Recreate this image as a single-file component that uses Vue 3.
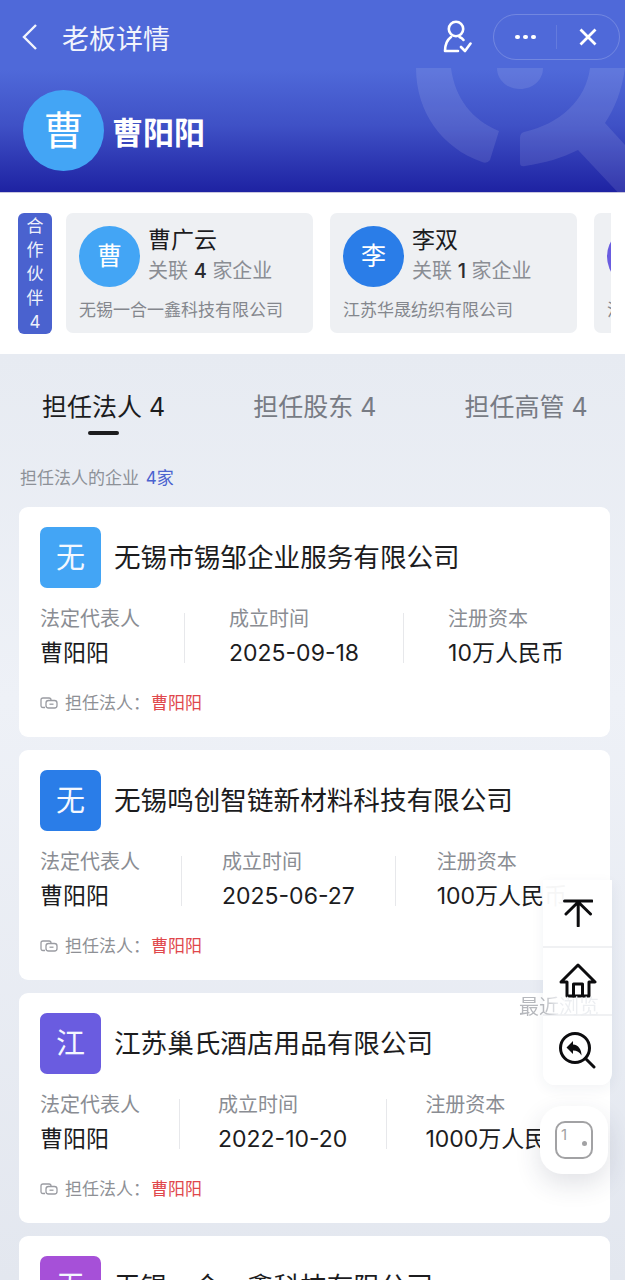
<script setup>
const partners = [
  { id: 1, initial: '曹', name: '曹广云', count: 4, company: '无锡一合一鑫科技有限公司', color: '#43a5f5' },
  { id: 2, initial: '李', name: '李双', count: 1, company: '江苏华晟纺织有限公司', color: '#2a7de8' },
  { id: 3, initial: '江', name: '江', count: 1, company: '江苏巢氏酒店用品有限公司', color: '#6a5ce0' }
]

const tabs = ['担任法人 4', '担任股东 4', '担任高管 4']

const companies = [
  { id: 1, initial: '无', name: '无锡市锡邹企业服务有限公司', date: '2025-09-18', capital: '10万人民币', color: '#43a5f5', gap: 44 },
  { id: 2, initial: '无', name: '无锡鸣创智链新材料科技有限公司', date: '2025-06-27', capital: '100万人民币', color: '#2a7de8', gap: 40.5 },
  { id: 3, initial: '江', name: '江苏巢氏酒店用品有限公司', date: '2022-10-20', capital: '1000万人民币', color: '#6a5ce0', gap: 38.5 },
  { id: 4, initial: '无', name: '无锡一合一鑫科技有限公司', date: '2024-03-12', capital: '100万人民币', color: '#a650d8', gap: 41 }
]
</script>

<template>
  <div class="page">
    <header class="hero">
      <svg class="watermark" viewBox="415 68 210 124" width="210" height="124">
        <path d="M416 68H451C455 98 472 120 499 131L490 160Q487 164 482 162C442 148 416 112 416 68Z" />
        <path d="M497 68H543C543 80 533 89 520 89C507 89 497 80 497 68Z" />
        <path d="M590 68C586 100 560 124 524 132Q520 133 520 138V163Q520 167 525 166C545 163 562 158 578 150L625 200V145L605 123C615 108 622 90 625 68Z" />
      </svg>
      <div class="nav">
        <svg class="back" viewBox="0 0 18 28" width="18" height="28">
          <path d="M15 2L3 14L15 26" />
        </svg>
        <span class="nav-title">老板详情</span>
        <svg class="user-icon" viewBox="0 0 30 34" width="30" height="34">
          <circle cx="14" cy="9" r="7.2" />
          <path d="M9 17C5 20 3 25 3 31H16" />
          <path d="M17.500 17C19 17.600 20.500 18.600 21.500 20" />
          <path d="M19 27L23 31L28.500 23.500" />
        </svg>
        <div class="capsule">
          <div class="dots"><i></i><i></i><i></i></div>
          <span class="capsule-sep"></span>
          <svg class="close" viewBox="0 0 20 20" width="20" height="20">
            <path d="M2.500 2.500L17.500 17.500M17.500 2.500L2.500 17.500" />
          </svg>
        </div>
      </div>
      <div class="boss">
        <div class="boss-avatar">曹</div>
        <span class="boss-name">曹阳阳</span>
      </div>
    </header>

    <section class="partners">
      <div class="partner-badge">
        <span>合</span><span>作</span><span>伙</span><span>伴</span><span>4</span>
      </div>
      <div class="partner-list">
        <div v-for="p in partners" :key="p.id" class="partner-card">
          <div class="partner-top">
            <div class="partner-avatar" :style="{ background: p.color }">{{ p.initial }}</div>
            <div>
              <div class="partner-name">{{ p.name }}</div>
              <div class="partner-sub">关联 <b>{{ p.count }}</b> 家企业</div>
            </div>
          </div>
          <div class="partner-company">{{ p.company }}</div>
        </div>
      </div>
    </section>

    <main class="content">
      <div class="tabs">
        <div v-for="(tab, index) in tabs" :key="tab" class="tab" :class="{ active: index === 0 }">{{ tab }}</div>
      </div>
      <div class="section-head">担任法人的企业 <em>4家</em></div>

      <div class="cards">
        <article v-for="c in companies" :key="c.id" class="card">
          <div class="card-head">
            <div class="card-icon" :style="{ background: c.color }">{{ c.initial }}</div>
            <h3>{{ c.name }}</h3>
          </div>
          <div class="facts" :style="{ gap: c.gap + 'px' }">
            <div>
              <div class="label">法定代表人</div>
              <div class="value">曹阳阳</div>
            </div>
            <span class="rule"></span>
            <div>
              <div class="label">成立时间</div>
              <div class="value">{{ c.date }}</div>
            </div>
            <span class="rule"></span>
            <div>
              <div class="label">注册资本</div>
              <div class="value">{{ c.capital }}</div>
            </div>
          </div>
          <div class="card-foot">
            <svg viewBox="0 0 18 12" width="18" height="12">
              <path d="M5 10.500H3Q1 10.500 1 8.500V3Q1 1 3 1H9Q11 1 11 3" />
              <rect x="6" y="3.500" width="11" height="7.500" rx="2.500" />
              <path d="M9.500 7.200H13.500" />
            </svg>
            <span>担任法人：</span><strong>曹阳阳</strong>
          </div>
        </article>
      </div>
    </main>

    <div class="float-panel">
      <div class="float-item">
        <svg viewBox="0 0 30 28" width="30" height="28">
          <path d="M1.500 2H29M15.200 27V3M3 15L15.200 3L27.500 15" />
        </svg>
      </div>
      <div class="float-item">
        <svg viewBox="0 0 38 36" width="38" height="36">
          <path d="M2 19L19 2L36 19H30V33H8V19Z" />
          <path d="M14.500 33V21H23.500V33" />
        </svg>
      </div>
      <div class="float-item">
        <svg viewBox="0 0 38 38" width="38" height="38">
          <circle cx="17" cy="17" r="14.500" />
          <path d="M27.500 27.500L36 36" />
          <path class="solid" d="M15 10L8.500 16.500L15 23V19.500C19 19.500 21.500 21 23.500 24.500C23.500 18.500 20.500 14 15 13.500Z" />
        </svg>
      </div>
    </div>
    <div class="recent">最近浏览</div>
    <div class="float-tabs">
      <div class="tab-count">
        <span>1</span>
        <i></i>
      </div>
    </div>
  </div>
</template>

<style>
html,
body {
  margin: 0;
  background: #e9edf4;
}
</style>

<style scoped>
.page {
  position: relative;
  width: 625px;
  height: 1280px;
  overflow: hidden;
  background: linear-gradient(180deg, #e7ebf2 354px, #eef1f7 700px, #e3e7ef 1280px);
  font-family: Inter, "Noto Sans CJK SC", "Noto Sans", sans-serif;
  color: #1c1c1e;
}

.hero {
  position: relative;
  height: 192px;
  background: linear-gradient(180deg, #4f69d9 0, #4f69d9 70px, #3f51c6 125px, #1e22a2 192px);
  color: #fff;
  border-bottom: 1px solid #c9c6de;
  box-sizing: content-box;
}

.watermark {
  position: absolute;
  right: 0;
  bottom: 0;
  fill: rgba(255, 255, 255, 0.1);
}

.nav {
  position: relative;
  display: flex;
  align-items: center;
  height: 46px;
  padding: 14px 5px 0 21px;
}

.back {
  fill: none;
  stroke: #f2f4fc;
  stroke-width: 2.400;
  margin-right: 23px;
}

.nav-title {
  font-size: 27px;
  flex: 1;
  color: #f2f4fc;
}

.user-icon {
  fill: none;
  stroke: #fff;
  stroke-width: 2.600;
  stroke-linecap: round;
  stroke-linejoin: round;
  margin-right: 21px;
}

.capsule {
  display: flex;
  align-items: center;
  box-sizing: border-box;
  width: 127px;
  height: 46px;
  border: 1.500px solid rgba(255, 255, 255, 0.2);
  border-radius: 23px;
  padding-left: 21px;
}

.dots {
  display: flex;
  gap: 3.500px;
  width: 24px;
}

.dots i {
  width: 4.500px;
  height: 4.500px;
  border-radius: 50%;
  background: #fff;
}

.capsule-sep {
  width: 1px;
  height: 24px;
  margin-left: 17px;
  background: rgba(255, 255, 255, 0.12);
}

.close {
  fill: none;
  stroke: #fff;
  stroke-width: 2.800;
  margin-left: 21px;
}

.boss {
  position: relative;
  display: flex;
  align-items: center;
  gap: 8px;
  margin-top: 30px;
  padding-left: 23px;
}

.boss-avatar {
  width: 81px;
  height: 81px;
  border-radius: 50%;
  background: #43a5f5;
  font-size: 40px;
  line-height: 81px;
  text-align: center;
}

.boss-name {
  font-size: 31px;
  font-weight: 700;
}

.partners {
  display: flex;
  gap: 14px;
  height: 161px;
  box-sizing: border-box;
  padding: 20px 14px 0 18px;
  background: #fff;
}

.partner-badge {
  display: flex;
  flex-direction: column;
  align-items: center;
  justify-content: center;
  flex: none;
  width: 34px;
  height: 121px;
  border-radius: 6px;
  background: #4a62cf;
  color: #eef1fb;
  font-size: 17px;
  line-height: 24px;
}

.partner-list {
  display: flex;
  gap: 17px;
  overflow: hidden;
  height: 121px;
}

.partner-card {
  flex: none;
  width: 247px;
  height: 120px;
  box-sizing: border-box;
  padding: 13px 13px 0;
  border-radius: 7px;
  background: #eef0f3;
}

.partner-top {
  display: flex;
  gap: 8px;
}

.partner-avatar {
  flex: none;
  width: 61px;
  height: 61px;
  border-radius: 50%;
  color: #fff;
  font-size: 25px;
  line-height: 61px;
  text-align: center;
}

.partner-name {
  font-size: 23px;
  line-height: 28px;
  color: #1c1c1e;
}

.partner-sub {
  margin-top: 3px;
  font-size: 20px;
  line-height: 28px;
  color: #8a8d93;
}

.partner-sub b {
  font-weight: 500;
  color: #2a2b30;
}

.partner-company {
  margin-top: 11px;
  font-size: 17px;
  line-height: 24px;
  color: #84878d;
  white-space: nowrap;
}

.tabs {
  display: flex;
  gap: 88px;
  padding: 34px 0 0 42px;
  white-space: nowrap;
}

.tab {
  position: relative;
  flex: none;
  font-size: 25px;
  line-height: 38px;
  height: 47px;
  color: #777b84;
}

.tab.active {
  color: #1c1c1e;
}

.tab.active::after {
  content: '';
  position: absolute;
  left: 50%;
  bottom: 0;
  width: 31px;
  height: 4px;
  margin-left: -15.500px;
  border-radius: 2px;
  background: #1c1c1e;
}

.section-head {
  margin-top: 31px;
  padding-left: 20px;
  font-size: 17px;
  line-height: 24px;
  color: #8d9198;
}

.section-head em {
  margin-left: 2px;
  font-style: normal;
  color: #4a62cf;
}

.cards {
  display: flex;
  flex-direction: column;
  gap: 13px;
  margin: 17px 15px 0 19px;
}

.card {
  box-sizing: border-box;
  height: 230px;
  padding: 20px 21px 0;
  border-radius: 9px;
  background: #fff;
}

.card-head {
  display: flex;
  align-items: center;
  gap: 13px;
}

.card-icon {
  flex: none;
  width: 61px;
  height: 61px;
  border-radius: 7px;
  color: #f4f8ff;
  font-size: 29px;
  line-height: 61px;
  text-align: center;
}

.card-head h3 {
  margin: -4px 0 0;
  font-size: 26.600px;
  font-weight: 400;
  white-space: nowrap;
}

.facts {
  display: flex;
  margin-top: 17px;
  white-space: nowrap;
}

.label {
  font-size: 20px;
  line-height: 28px;
  color: #8a8d93;
}

.value {
  margin-top: 3px;
  font-size: 23px;
  line-height: 34px;
  color: #1c1c1e;
}

.rule {
  flex: none;
  align-self: center;
  width: 1px;
  height: 50px;
  background: #e7e8eb;
}

.card-foot {
  display: flex;
  align-items: center;
  gap: 7px;
  margin-top: 21px;
  font-size: 17px;
  line-height: 24px;
  color: #8e9095;
}

.card-foot svg {
  fill: none;
  stroke: #9a9ca2;
  stroke-width: 1.300;
}

.card-foot span {
  margin-right: -6px;
}

.card-foot strong {
  font-weight: 400;
  color: #e0474c;
}

.recent {
  position: absolute;
  left: 519px;
  top: 994px;
  font-size: 20px;
  line-height: 26px;
  white-space: nowrap;
  background: linear-gradient(90deg, #b5b7bc 0, #b5b7bc 24px, #eceef1 40px);
  -webkit-background-clip: text;
  background-clip: text;
  color: transparent;
}

.float-panel {
  position: absolute;
  left: 543px;
  top: 880px;
  width: 69px;
  height: 205px;
  border-radius: 0 0 12px 12px;
  background: rgba(255, 255, 255, 0.96);
  box-shadow: 0 4px 14px rgba(40, 50, 80, 0.06);
}

.float-item {
  display: flex;
  align-items: center;
  justify-content: center;
  height: 68px;
  border-bottom: 2px solid #f0f1f3;
  box-sizing: border-box;
}

.float-item:nth-child(2) {
  padding-left: 1px;
}

.float-item:last-child {
  height: 69px;
  padding: 0 2px 2px 0;
  border-bottom: 0;
}

.float-item svg {
  fill: none;
  stroke: #0c0c0e;
  stroke-width: 3;
  stroke-linecap: round;
  stroke-linejoin: round;
}

.float-item svg .solid {
  fill: #0c0c0e;
  stroke: none;
}

.float-tabs {
  position: absolute;
  left: 540px;
  top: 1106px;
  display: flex;
  align-items: center;
  justify-content: center;
  width: 68px;
  height: 68px;
  border-radius: 22px;
  background: #fff;
  box-shadow: 0 10px 26px rgba(40, 50, 80, 0.14);
}

.tab-count {
  position: relative;
  box-sizing: border-box;
  width: 38px;
  height: 38px;
  border: 2.500px solid #a2a2a4;
  border-radius: 10px;
}

.tab-count span {
  position: absolute;
  left: 4px;
  top: 3px;
  font-size: 15px;
  line-height: 18px;
  color: #a2a2a4;
}

.tab-count i {
  position: absolute;
  right: 4px;
  bottom: 11px;
  width: 5px;
  height: 5px;
  border-radius: 50%;
  background: #a2a2a4;
}
</style>
